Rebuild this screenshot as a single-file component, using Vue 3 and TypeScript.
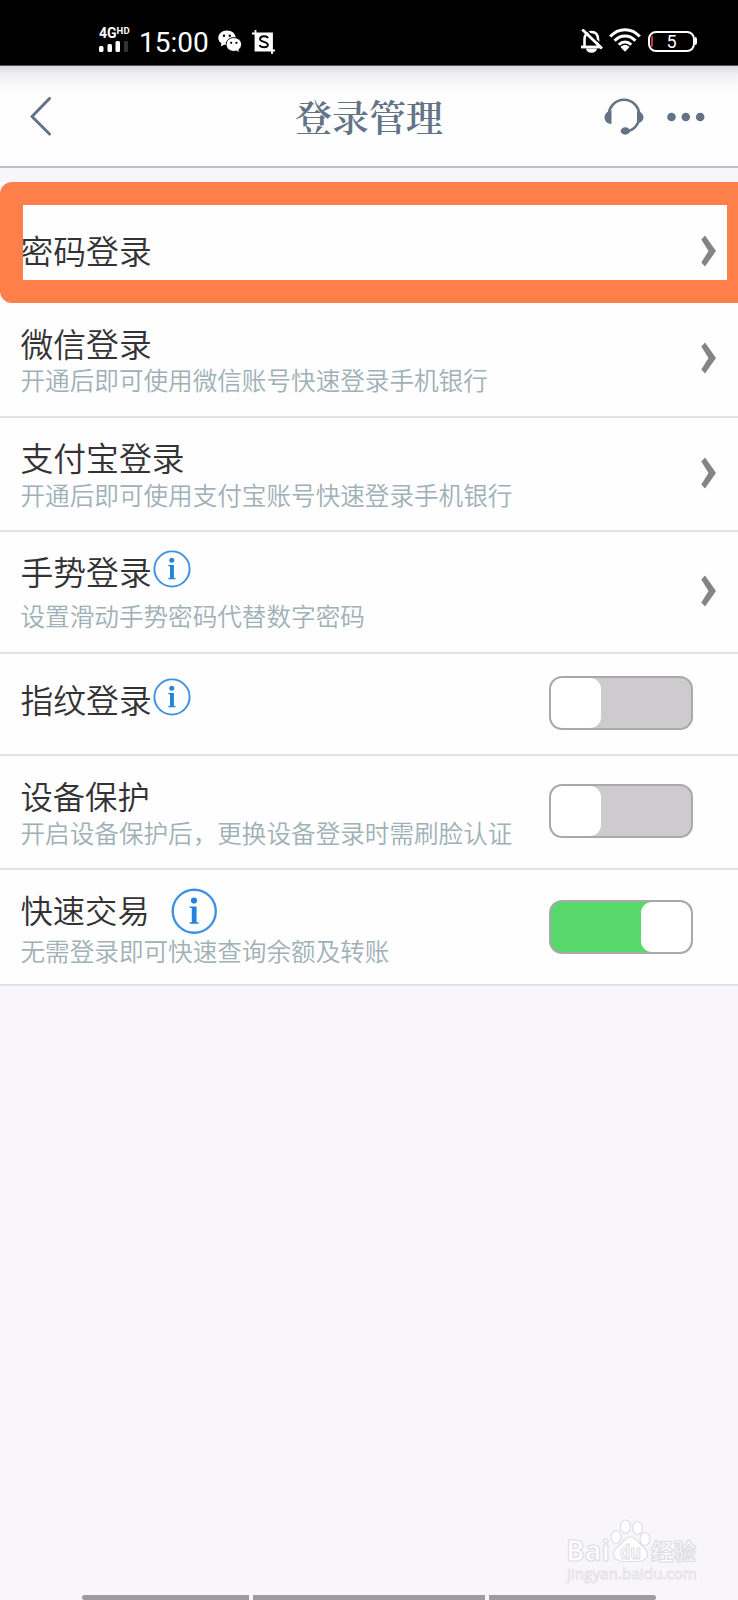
<script setup lang="ts">
import { ref } from 'vue'

interface Row {
  id: string
  title: string
  desc?: string
  info?: boolean
  control: 'link' | 'switch'
  on?: boolean
  marked?: boolean
}

const rows = ref<Row[]>([
  { id: 'password', title: '密码登录', control: 'link', marked: true },
  { id: 'wechat', title: '微信登录', desc: '开通后即可使用微信账号快速登录手机银行', control: 'link' },
  { id: 'alipay', title: '支付宝登录', desc: '开通后即可使用支付宝账号快速登录手机银行', control: 'link' },
  { id: 'gesture', title: '手势登录', desc: '设置滑动手势密码代替数字密码', info: true, control: 'link' },
  { id: 'finger', title: '指纹登录', info: true, control: 'switch', on: false },
  { id: 'device', title: '设备保护', desc: '开启设备保护后，更换设备登录时需刷脸认证', control: 'switch', on: false },
  { id: 'quick', title: '快速交易', desc: '无需登录即可快速查询余额及转账', info: true, control: 'switch', on: true },
])

function toggle(row: Row) {
  row.on = !row.on
}
</script>

<template>
  <div class="screen">
    <div class="status">
      <div class="signal">
        <div class="net">4G<span class="hd">HD</span></div>
        <svg width="30" height="11" viewBox="0 0 30 11">
          <g fill="#fff">
            <rect x="0" y="5" width="4.500" height="6" rx="1.500" />
            <rect x="8.500" y="3" width="4.500" height="8" rx="1.500" />
            <rect x="16.500" y="0" width="4.500" height="11" rx="1.500" />
          </g>
          <rect x="25" y="0" width="4" height="11" rx="1" fill="#333" />
        </svg>
      </div>
      <div class="time">15:00</div>
      <svg class="wechat-icon" width="24" height="24" viewBox="0 0 24 24">
        <path d="M9 .5C4 .5.3 3.8.3 7.800c0 2.300 1.200 4.200 3.100 5.500L2.800 16.500l3.300-1.700c.9.3 1.900.4 2.900.4 4.900 0 8.700-3.200 8.700-7.400S13.900.5 9 .5z" fill="#fff" />
        <circle cx="6" cy="5.800" r="1.200" /><circle cx="11.800" cy="5.800" r="1.200" />
        <path d="M15.800 7.600c-4.300 0-7.700 3-7.700 6.900s3.400 6.900 7.700 6.900c.9 0 1.700-.1 2.500-.4l3.200 1.900-.7-3.100c1.600-1.200 2.800-3.200 2.800-5.300 0-3.900-3.500-6.900-7.800-6.900z" fill="#fff" stroke="#000" stroke-width="1" />
        <circle cx="13.200" cy="12.800" r="1.100" /><circle cx="18.400" cy="12.800" r="1.100" />
      </svg>
      <svg class="crop" width="24" height="24" viewBox="0 0 24 24">
        <path d="M0 3.500H20V24M3.500 0V20.500H23" fill="none" stroke="#fff" stroke-width="1.800" />
        <rect x="3.500" y="3.500" width="16.500" height="17" fill="#fff" />
        <path d="M16 8.200C14.800 5.600 8.400 5.500 8 8.800c-.4 3.500 8 2.600 7.900 6-.1 3.500-7 3.100-8.400.3" fill="none" stroke="#000" stroke-width="1.900" />
      </svg>
      <div class="grow"></div>
      <svg class="bell" width="22" height="24" viewBox="0 0 22 24" fill="none" stroke="#fff">
        <path d="M3.500 18V10.500C3.500 5.800 6.300 3 10.500 3s6.500 2.800 6.500 7.500V18" stroke-width="2.600" />
        <path d="M0 18H20.500" stroke-width="2.800" />
        <path d="M5 19.500h11a5.500 4.200 0 0 1-11 0z" fill="#fff" stroke="none" />
        <path d="M3.200-1L22 17.500" stroke="#000" stroke-width="1.600" />
        <path d="M1.300.5L21 19.500" stroke-width="2.800" />
      </svg>
      <svg class="wifi" width="32" height="24" viewBox="0 0 32 24" fill="none" stroke="#fff" stroke-width="3">
        <path d="M1.200 8.600C9.500-.7 22.500-.7 30.800 8.600" />
        <path d="M5.600 12.800C11.500 6.500 20.500 6.500 26.400 12.800" />
        <path d="M9.800 16.800C13.500 13 18.500 13 22.200 16.800" />
        <path d="M11.500 19c3-2.600 6-2.600 9 0L16 23.800z" fill="#fff" stroke="none" />
      </svg>
      <div class="battery"><span class="charge"></span><span>5</span></div>
      <span class="cap"></span>
    </div>

    <header class="header">
      <svg class="back" width="24" height="40" viewBox="0 0 24 40">
        <path d="M20.500 1.500L3 19.500L20.500 37" fill="none" stroke="#637385" stroke-width="3" stroke-linecap="round" stroke-linejoin="round" />
      </svg>
      <h1>登录管理</h1>
      <div class="actions">
        <svg width="40" height="38" viewBox="0 0 40 38">
          <path d="M4.800 17A15.200 15.200 0 0 1 35.200 17M35.200 20C35 26 30 32.500 22 33.500" fill="none" stroke="#637385" stroke-width="2.500" />
          <path d="M7.500 12.500V26C3.500 26 .5 23.200.5 19.500S3.500 13 7.500 12.500z" fill="#637385" />
          <path d="M33 13c4.200.8 6.500 3.300 6.500 6.300s-2.300 5.400-6.500 6.200z" fill="#637385" />
          <ellipse cx="21.300" cy="33" rx="4.700" ry="3.700" fill="#637385" />
        </svg>
        <svg width="38" height="10" viewBox="0 0 38 10" fill="#637385">
          <circle cx="4.500" cy="5" r="4.300" /><circle cx="18.800" cy="5" r="4.300" /><circle cx="33.200" cy="5" r="4.300" />
        </svg>
      </div>
    </header>

    <main class="list">
      <section v-for="row in rows" :key="row.id" class="row" :class="row.id">
        <div class="text">
          <div class="title">
            <span>{{ row.title }}</span>
            <svg v-if="row.info" class="info" viewBox="0 0 38 38">
              <circle cx="19" cy="19" r="17.600" fill="none" stroke="#3d90e4" stroke-width="1.900" />
              <circle cx="18.800" cy="10.300" r="2.500" fill="#2583e0" />
              <path d="M15.300 15.100h5.600V28h1.600v1.200h-7.200V28H17V16.300h-1.700z" fill="#2583e0" />
            </svg>
          </div>
          <div v-if="row.desc" class="desc">{{ row.desc }}</div>
        </div>
        <svg v-if="row.control === 'link'" class="chevron" width="15" height="32" viewBox="0 0 15 32">
          <path d="M4 .5L15 16L4 31.500L.3 27.500L7.500 16L.3 4.500z" fill="#858386" />
        </svg>
        <button v-else class="switch" :class="{ on: row.on }" @click="toggle(row)"><span class="knob"></span></button>
        <div v-if="row.marked" class="mark"></div>
      </section>
    </main>

    <div class="watermark">
      <svg width="134" height="66" viewBox="0 0 134 66">
        <g fill="#fff" stroke="#dedde1" stroke-width="1.200">
          <text x="1" y="43" class="wm-big" textLength="44" lengthAdjust="spacingAndGlyphs">Bai</text>
          <path d="M65.500 19c-6 0-8 6-12 9-5 4-6 7-4.500 11 3 5 9 4.500 16.500 4.500s13.500.5 16.500-4.500c1.500-4 .5-7-4.500-11-4-3-6-9-12-9z" />
          <ellipse cx="51" cy="19" rx="5" ry="6.500" /><ellipse cx="60.500" cy="8.700" rx="5" ry="6.700" />
          <ellipse cx="72.500" cy="10" rx="5" ry="6.500" /><ellipse cx="80" cy="21" rx="5" ry="6.500" />
          <text x="55" y="41" class="wm-du" textLength="21" lengthAdjust="spacingAndGlyphs">du</text>
          <text x="86" y="42" class="wm-cn" textLength="45" lengthAdjust="spacingAndGlyphs">经验</text>
        </g>
        <text x="2" y="61" class="wm-url" textLength="130" lengthAdjust="spacingAndGlyphs">jingyan.baidu.com</text>
      </svg>
    </div>
    <div class="nav"><i></i><i></i><i></i></div>
  </div>
</template>

<style>
body { margin: 0; background: #f8f7fa; }
</style>

<style scoped>
.screen {
  position: relative;
  display: flex;
  flex-direction: column;
  width: 738px;
  height: 1600px;
  overflow: hidden;
  background: #f8f6fa;
  font-family: "Noto Sans CJK SC", sans-serif;
}
.status {
  display: flex;
  align-items: flex-start;
  height: 66px;
  box-sizing: border-box;
  padding: 0 41px 0 99px;
  border-bottom: 1px solid #5a585b;
  background: #000;
  color: #fff;
  font-family: Roboto, sans-serif;
}
.signal { width: 40px; padding-top: 26px; }
.net { display: flex; height: 14px; font: bold 14px/14px Roboto, sans-serif; }
.hd { font-size: 9.5px; line-height: 9px; letter-spacing: .3px; }
.signal svg { display: block; margin: 1px 0 0 0; }
.time { width: 79px; padding-top: 26px; font-size: 28px; line-height: 33px; }
.wechat-icon { margin-top: 30px; }
.crop { margin: 30px 0 0 10px; }
.grow { flex: 1; }
.bell { margin: 29px 6px 0 0; }
.wifi { margin: 28px 7px 0 0; }
.battery {
  position: relative;
  width: 47px;
  height: 21px;
  margin-top: 31px;
  box-sizing: border-box;
  border: 2px solid #fff;
  border-radius: 8px;
  text-align: center;
  font-size: 18px;
  line-height: 18px;
}
.charge { position: absolute; left: 1px; top: 3px; width: 2px; height: 11px; background: #c63434; border-radius: 1px; }
.cap { width: 2px; height: 8px; margin-top: 37px; background: #fff; border-radius: 0 2px 2px 0; }

.header {
  display: grid;
  grid-template-columns: 200px 1fr 200px;
  height: 102px;
  box-sizing: border-box;
  border-bottom: 2px solid #b6c3c9;
  background: linear-gradient(#dcdadd 0, #f1f0f3 9px, #fbfafc 20px, #fefefe 28px);
}
.back { margin: 31px 0 0 29px; }
h1 {
  margin: 22.500px 0 0;
  text-align: center;
  color: #637385;
  font: 600 37px/54px "Noto Serif CJK SC", "Noto Sans CJK SC", serif;
  white-space: nowrap;
}
.actions { display: flex; align-items: flex-start; padding-left: 66px; }
.actions svg:first-child { margin-top: 32px; }
.actions svg:last-child { margin: 45.500px 0 0 23px; }

.list { margin-top: 14px; }
.row {
  position: relative;
  display: flex;
  align-items: flex-start;
  height: 114px;
  box-sizing: border-box;
  padding-left: 20.5px;
  border-bottom: 2px solid #e2e1e4;
  background: #fefefe;
}
.text { flex: 1; padding-top: 19px; }
.title {
  display: flex;
  align-items: center;
  height: 40px;
  color: #343235;
  font-size: 32.8px;
  font-weight: 350;
  line-height: 40px;
}
.desc {
  margin-top: 1.500px;
  color: #9fb0b6;
  font-size: 24.6px;
  font-weight: 350;
  line-height: 30px;
  white-space: nowrap;
}
.info { width: 38px; height: 38px; margin: -5px 0 0 1.500px; }
.chevron { margin: 38.500px 22px 0 0; }
.switch {
  width: 144px;
  height: 54px;
  margin: 28px 45px 0 0;
  padding: 0;
  display: flex;
  border: 2px solid #aaa8aa;
  border-radius: 13px;
  background: #cdcbce;
  overflow: hidden;
}
.switch.on { justify-content: flex-end; background: #57d86b; }
.knob { width: 50px; height: 50px; border-radius: 11px; background: #fff; }

.password { height: 121px; border-bottom: 0; }
.password .text { padding-top: 48px; }
.password .chevron { margin-top: 52.500px; }
.wechat { height: 115px; }
.wechat .text { padding-top: 20px; }
.wechat .desc { margin-top: 1px; }
.gesture { height: 122px; }
.gesture .desc { margin-top: 9px; }
.gesture .chevron { margin-top: 43px; }
.finger { height: 102px; }
.finger .text { padding-top: 25px; }
.finger .switch { margin-top: 22px; }
.quick { height: 116px; }
.quick .info { flex: none; width: 46.5px; height: 46.5px; margin: 4px 0 0 21.500px; }
.quick .title, .device .title { font-size: 32.3px; }
.quick .desc { margin-top: 5.500px; }
.quick .switch { margin-top: 30px; }
.mark {
  position: absolute;
  inset: 0;
  border: solid #ff7f4a;
  border-width: 23px 11px 23px 23px;
  border-radius: 12px 0 0 12px;
}

.watermark { position: absolute; left: 565px; top: 1518px; }
.watermark svg { display: block; }
.wm-big { font: bold 29px "Open Sans", sans-serif; }
.wm-du { font: bold 19px "Open Sans", sans-serif; }
.wm-cn { font: bold 23px "Noto Sans CJK SC", sans-serif; }
.wm-url { font: 15px "Open Sans", sans-serif; fill: #fbfafc; stroke: #e3e2e6; stroke-width: .8px; }
.nav { position: absolute; left: 82px; bottom: 0; display: flex; gap: 4px; }
.nav i { width: 167px; height: 5px; background: #9e9c9f; }
.nav i:nth-child(2) { width: 232px; }
.nav i:first-child { border-radius: 3px 0 0 3px; }
.nav i:last-child { border-radius: 0 3px 3px 0; }
</style>
